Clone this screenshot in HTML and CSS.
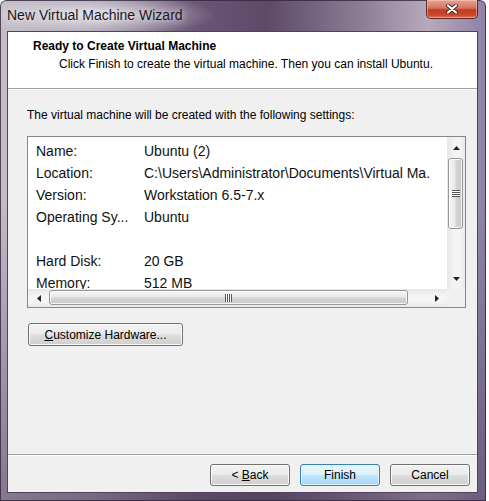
FILE: index.html
```html
<!DOCTYPE html>
<html lang="en">
<head>
    <meta charset="UTF-8">
    <title>New Virtual Machine Wizard</title>
    <link rel="stylesheet" href="styles.css">
</head>
<body>
    <div class="window">
        <div class="titlebar">
            <span class="title">New Virtual Machine Wizard</span>
            <button class="close" aria-label="Close">
                <svg width="14" height="10" viewBox="0 0 14 10">
                    <path d="M3 1.5 L11 8.5 M11 1.5 L3 8.5" stroke="#3b2b2b" stroke-width="4" stroke-linecap="round"/>
                    <path d="M3 1.5 L11 8.5 M11 1.5 L3 8.5" stroke="#fff" stroke-width="2.2" stroke-linecap="round"/>
                </svg>
            </button>
        </div>
        <div class="client">
            <div class="header">
                <h1>Ready to Create Virtual Machine</h1>
                <p>Click Finish to create the virtual machine. Then you can install Ubuntu.</p>
            </div>
            <div class="content">
                <p class="intro">The virtual machine will be created with the following settings:</p>
                <div class="listbox">
                    <div class="rows">
                        <div class="row"><span class="label">Name:</span><span class="value">Ubuntu (2)</span></div>
                        <div class="row"><span class="label">Location:</span><span class="value">C:\Users\Administrator\Documents\Virtual Ma.</span></div>
                        <div class="row"><span class="label">Version:</span><span class="value">Workstation 6.5-7.x</span></div>
                        <div class="row"><span class="label">Operating Sy...</span><span class="value">Ubuntu</span></div>
                        <div class="row"></div>
                        <div class="row"><span class="label">Hard Disk:</span><span class="value">20 GB</span></div>
                        <div class="row"><span class="label">Memory:</span><span class="value">512 MB</span></div>
                    </div>
                    <div class="vscroll">
                        <div class="arrow">
                            <svg width="7" height="4" viewBox="0 0 7 4"><polygon points="3.5,0 7,4 0,4" fill="#222"/></svg>
                        </div>
                        <div class="vthumb"><span class="grip-v"></span></div>
                        <div class="track"></div>
                        <div class="arrow">
                            <svg width="7" height="4" viewBox="0 0 7 4"><polygon points="0,0 7,0 3.5,4" fill="#222"/></svg>
                        </div>
                    </div>
                    <div class="hscroll">
                        <div class="arrow">
                            <svg width="4" height="7" viewBox="0 0 4 7"><polygon points="4,0 4,7 0,3.5" fill="#222"/></svg>
                        </div>
                        <div class="hthumb"><span class="grip-h"></span></div>
                        <div class="track"></div>
                        <div class="arrow">
                            <svg width="4" height="7" viewBox="0 0 4 7"><polygon points="0,0 4,3.5 0,7" fill="#222"/></svg>
                        </div>
                    </div>
                    <div class="corner"></div>
                </div>
                <button class="btn customize"><u>C</u>ustomize Hardware...</button>
            </div>
            <div class="footer">
                <button class="btn">&lt; <u>B</u>ack</button>
                <button class="btn default">Finish</button>
                <button class="btn">Cancel</button>
            </div>
        </div>
    </div>
</body>
</html>
```

FILE: styles.css
```css
* {
    box-sizing: border-box;
}
body {
    margin: 0;
    background: #fff;
    font-family: "Liberation Sans", Arial, sans-serif;
    color: #000;
}
.window {
    width: 486px;
    height: 501px;
    display: flex;
    flex-direction: column;
    border-radius: 6px 6px 0 0;
    background:
        radial-gradient(ellipse 120px 22px at 95px 15px, rgba(235, 232, 238, 0.85), rgba(235, 232, 238, 0) 100%),
        linear-gradient(to bottom, rgba(90, 70, 105, 0) 0, rgba(90, 70, 105, 0) 40%, rgba(80, 60, 95, 0.55) 100%),
        linear-gradient(to right, #c3bec7 0%, #aaa1b0 18%, #6a5676 40%, #5d4a69 55%, #8e7f98 75%, #b7aabb 88%, #8f80a8 100%);
    box-shadow: inset 0 0 0 1px rgba(50, 38, 62, 0.8);
}
.titlebar {
    height: 31px;
    display: flex;
    align-items: flex-start;
    padding-left: 7px;
}
.title {
    font-size: 14px;
    line-height: 30px;
    color: #1c1722;
    text-shadow: 0 0 6px rgba(255, 255, 255, 0.9);
}
.close {
    margin-left: auto;
    margin-right: 8px;
    width: 52px;
    height: 19px;
    padding: 0;
    border: 1px solid #5a2a2a;
    border-top: none;
    border-radius: 0 0 5px 5px;
    background: linear-gradient(to bottom, #e8a395 0%, #d7735f 45%, #c23a1f 55%, #c9492c 85%, #e07a55 100%);
    box-shadow: inset 0 0 0 1px rgba(255, 210, 200, 0.45);
    display: flex;
    align-items: center;
    justify-content: center;
}
.client {
    margin-left: 7px;
    width: 471px;
    height: 462px;
    border: 1px solid #4f4359;
    background: #f0f0f0;
    display: flex;
    flex-direction: column;
    font-size: 12px;
}
.header {
    height: 57px;
    background: #fff;
    border-bottom: 1px solid #a0a0a0;
    box-shadow: 0 1px 0 #fff;
    padding: 7px 0 0 25px;
}
.header h1 {
    margin: 0;
    font-size: 12px;
    font-weight: bold;
    line-height: 15px;
}
.header p {
    margin: 3px 0 0 26px;
    line-height: 15px;
}
.content {
    flex: 1;
    padding: 19px 0 0 19px;
}
.intro {
    margin: 0;
    line-height: 15px;
}
.listbox {
    margin-top: 13px;
    width: 439px;
    height: 172px;
    border: 1px solid #828790;
    background: #fff;
    display: grid;
    grid-template-columns: 1fr 18px;
    grid-template-rows: 1fr 18px;
    overflow: hidden;
}
.rows {
    padding: 3px 0 0 8px;
    overflow: hidden;
    font-size: 14px;
    color: #111;
}
.row {
    height: 22px;
    line-height: 22px;
    display: flex;
    white-space: nowrap;
}
.label {
    width: 108px;
    flex: none;
}
.vscroll {
    display: flex;
    flex-direction: column;
    background: linear-gradient(to right, #e6e6e6, #f4f4f4 40%, #f4f4f4 70%, #e9e9e9);
}
.hscroll {
    display: flex;
    background: linear-gradient(to bottom, #e6e6e6, #f4f4f4 40%, #f4f4f4 70%, #e9e9e9);
}
.vscroll .arrow {
    height: 21px;
    display: flex;
    align-items: center;
    justify-content: center;
}
.hscroll .arrow {
    width: 21px;
    display: flex;
    align-items: center;
    justify-content: center;
}
.track {
    flex: 1;
}
.vthumb {
    height: 71px;
    margin: 0 2px 0 1px;
    border: 1px solid #979797;
    border-radius: 3px;
    background: linear-gradient(to right, #f6f6f6, #e8e8e8 45%, #d4d4d4 55%, #c9c9c9);
    box-shadow: inset 0 0 0 1px rgba(255, 255, 255, 0.8);
    display: flex;
    align-items: center;
    justify-content: center;
}
.hthumb {
    width: 359px;
    margin: 1px 0 2px;
    border: 1px solid #979797;
    border-radius: 3px;
    background: linear-gradient(to bottom, #f6f6f6, #e8e8e8 45%, #d4d4d4 55%, #c9c9c9);
    box-shadow: inset 0 0 0 1px rgba(255, 255, 255, 0.8);
    display: flex;
    align-items: center;
    justify-content: center;
}
.grip-v {
    width: 8px;
    height: 7px;
    background: repeating-linear-gradient(to bottom, #555 0, #555 1px, #fff 1px, #fff 2px);
}
.grip-h {
    width: 7px;
    height: 8px;
    background: repeating-linear-gradient(to right, #555 0, #555 1px, #fff 1px, #fff 2px);
}
.corner {
    background: #f0f0f0;
}
.btn {
    font-family: "Liberation Sans", Arial, sans-serif;
    font-size: 12px;
    color: #000;
    height: 22px;
    padding: 0;
    border: 1px solid #707070;
    border-radius: 3px;
    background: linear-gradient(to bottom, #f2f2f2 0%, #ebebeb 48%, #dddddd 52%, #cfcfcf 100%);
    box-shadow: inset 0 0 0 1px #fbfbfb;
}
.customize {
    display: block;
    margin-top: 15px;
    margin-left: 1px;
    width: 155px;
    height: 23px;
}
.footer {
    height: 38px;
    border-top: 1px solid #a0a0a0;
    box-shadow: inset 0 1px 0 #fff;
    display: flex;
    justify-content: flex-end;
    align-items: flex-start;
    gap: 10px;
    padding: 9px 7px 0 0;
}
.footer .btn {
    width: 80px;
}
.default {
    border-color: #3c7fb1;
    background: linear-gradient(to bottom, #eaf6fd 0%, #d9f0fc 48%, #bee6fd 52%, #a7d9f5 100%);
    box-shadow: inset 0 0 0 1px #e0f2fc;
}
```
